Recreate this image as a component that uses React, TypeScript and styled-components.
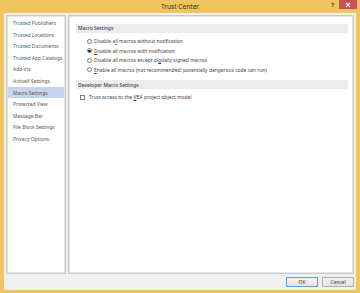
import React from 'react';
import styled, { createGlobalStyle } from 'styled-components';

const GlobalStyle = createGlobalStyle`
  html, body {
    margin: 0;
    padding: 0;
    background: #f0c45c;
  }
  body {
    font-family: 'Noto Sans', 'Open Sans', sans-serif;
  }
`;

const Window = styled.div`
  width: 360px;
  height: 293px;
  box-sizing: border-box;
  background: #f1c55e;
  padding: 0 4px 3px 4px;
  display: flex;
  flex-direction: column;
`;

const TitleBar = styled.div`
  height: 13px;
  display: grid;
  grid-template-columns: 1fr auto 1fr;
  align-items: center;
`;

const Title = styled.div`
  grid-column: 2;
  font-size: 6.6px;
  color: #2b2b2b;
  margin-top: -1px;
`;

const Controls = styled.div`
  grid-column: 3;
  justify-self: end;
  align-self: start;
  display: flex;
  align-items: flex-start;
  gap: 5px;
  margin-right: -1px;
`;

const Help = styled.span`
  font-size: 6px;
  font-weight: bold;
  color: #333;
  line-height: 8px;
  margin-top: 1px;
`;

const CloseButton = styled.div`
  width: 18px;
  height: 9px;
  background: #c75050;
  display: flex;
  align-items: center;
  justify-content: center;
`;

const Body = styled.div`
  flex: 1;
  background: #f0f0f0;
  display: flex;
  flex-direction: column;
  padding: 2px 2px 0 2px;
  min-height: 0;
`;

const Panels = styled.div`
  flex: 1;
  display: flex;
  gap: 2px;
  min-height: 0;
`;

const Nav = styled.div`
  width: 60px;
  box-sizing: border-box;
  background: #fff;
  border: 1px solid #c9c9c9;
  box-shadow: inset 0 0 0 1px #e6e6e6;
  padding: 1.5px 1px;
  display: flex;
  flex-direction: column;
`;

const NavItem = styled.div<{ $active?: boolean }>`
  height: 11.55px;
  flex: none;
  display: flex;
  align-items: center;
  padding-left: 5px;
  font-size: 4.95px;
  color: #555;
  white-space: nowrap;
  background: ${(p) => (p.$active ? '#c5d5ef' : 'transparent')};
`;

const Main = styled.div`
  flex: 1;
  box-sizing: border-box;
  background: #fff;
  border: 1px solid #c9c9c9;
  box-shadow: inset 0 0 0 1px #e6e6e6;
  padding: 7.5px 5px 0 7px;
  display: flex;
  flex-direction: column;
`;

const Band = styled.div`
  height: 9px;
  background: #ececec;
  display: flex;
  align-items: center;
  padding-left: 2px;
  font-size: 4.95px;
  color: #3a3a3a;
  font-weight: 500;
`;

const OptionList = styled.div<{ $indent: number; $top: number }>`
  display: flex;
  flex-direction: column;
  padding: ${(p) => p.$top}px 0 0 ${(p) => p.$indent}px;
  margin-bottom: 5.5px;
`;

const OptionRow = styled.label`
  height: 9.5px;
  display: flex;
  align-items: center;
  gap: 2px;
  font-size: 4.95px;
  color: #444;
  white-space: nowrap;
`;

const Radio = styled.span<{ $checked?: boolean }>`
  width: 5px;
  height: 5px;
  box-sizing: border-box;
  border-radius: 50%;
  border: 0.7px solid #7a7a7a;
  background: #fff;
  display: flex;
  align-items: center;
  justify-content: center;
  &::after {
    content: '';
    width: 2.4px;
    height: 2.4px;
    border-radius: 50%;
    background: ${(p) => (p.$checked ? '#222' : 'transparent')};
  }
`;

const Checkbox = styled.span`
  width: 5px;
  height: 5px;
  box-sizing: border-box;
  border: 0.7px solid #7a7a7a;
  background: #fff;
  margin-right: 2px;
`;

const Key = styled.span`
  text-decoration: underline;
  text-decoration-thickness: 0.5px;
  text-underline-offset: 0.6px;
`;

const Footer = styled.div`
  height: 16px;
  display: flex;
  justify-content: flex-end;
  align-items: center;
  gap: 4px;
`;

const Button = styled.div<{ $default?: boolean }>`
  width: 32px;
  height: 10px;
  box-sizing: border-box;
  border: 1px solid ${(p) => (p.$default ? '#5f9fd4' : '#adadad')};
  background: linear-gradient(#f2f2f2, #e4e4e4);
  display: flex;
  align-items: center;
  justify-content: center;
  font-size: 4.95px;
  color: #333;
`;

const navItems = [
  'Trusted Publishers',
  'Trusted Locations',
  'Trusted Documents',
  'Trusted App Catalogs',
  'Add-ins',
  'ActiveX Settings',
  'Macro Settings',
  'Protected View',
  'Message Bar',
  'File Block Settings',
  'Privacy Options',
];

const App = () => {
  const [selected, setSelected] = React.useState(1);

  return (
    <>
      <GlobalStyle />
      <Window>
        <TitleBar>
          <Title>Trust Center</Title>
          <Controls>
            <Help>?</Help>
            <CloseButton>
              <svg width="6" height="6" viewBox="0 0 6 6">
                <path d="M1 1 L5 5 M5 1 L1 5" stroke="#fff" strokeWidth="1.2" />
              </svg>
            </CloseButton>
          </Controls>
        </TitleBar>
        <Body>
          <Panels>
            <Nav>
              {navItems.map((item) => (
                <NavItem key={item} $active={item === 'Macro Settings'}>
                  {item}
                </NavItem>
              ))}
            </Nav>
            <Main>
              <Band>Macro Settings</Band>
              <OptionList $indent={11} $top={4}>
                <OptionRow onClick={() => setSelected(0)}>
                  <Radio $checked={selected === 0} />
                  <span>Disable a<Key>l</Key>l macros without notification</span>
                </OptionRow>
                <OptionRow onClick={() => setSelected(1)}>
                  <Radio $checked={selected === 1} />
                  <span><Key>D</Key>isable all macros with notification</span>
                </OptionRow>
                <OptionRow onClick={() => setSelected(2)}>
                  <Radio $checked={selected === 2} />
                  <span>Disable all macros except di<Key>g</Key>itally signed macros</span>
                </OptionRow>
                <OptionRow onClick={() => setSelected(3)}>
                  <Radio $checked={selected === 3} />
                  <span><Key>E</Key>nable all macros (not recommended; potentially dangerous code can run)</span>
                </OptionRow>
              </OptionList>
              <Band>Developer Macro Settings</Band>
              <OptionList $indent={4} $top={3.25}>
                <OptionRow>
                  <Checkbox />
                  <span>Trust access to the <Key>V</Key>BA project object model</span>
                </OptionRow>
              </OptionList>
            </Main>
          </Panels>
          <Footer>
            <Button $default>OK</Button>
            <Button>Cancel</Button>
          </Footer>
        </Body>
      </Window>
    </>
  );
};

export default App;
